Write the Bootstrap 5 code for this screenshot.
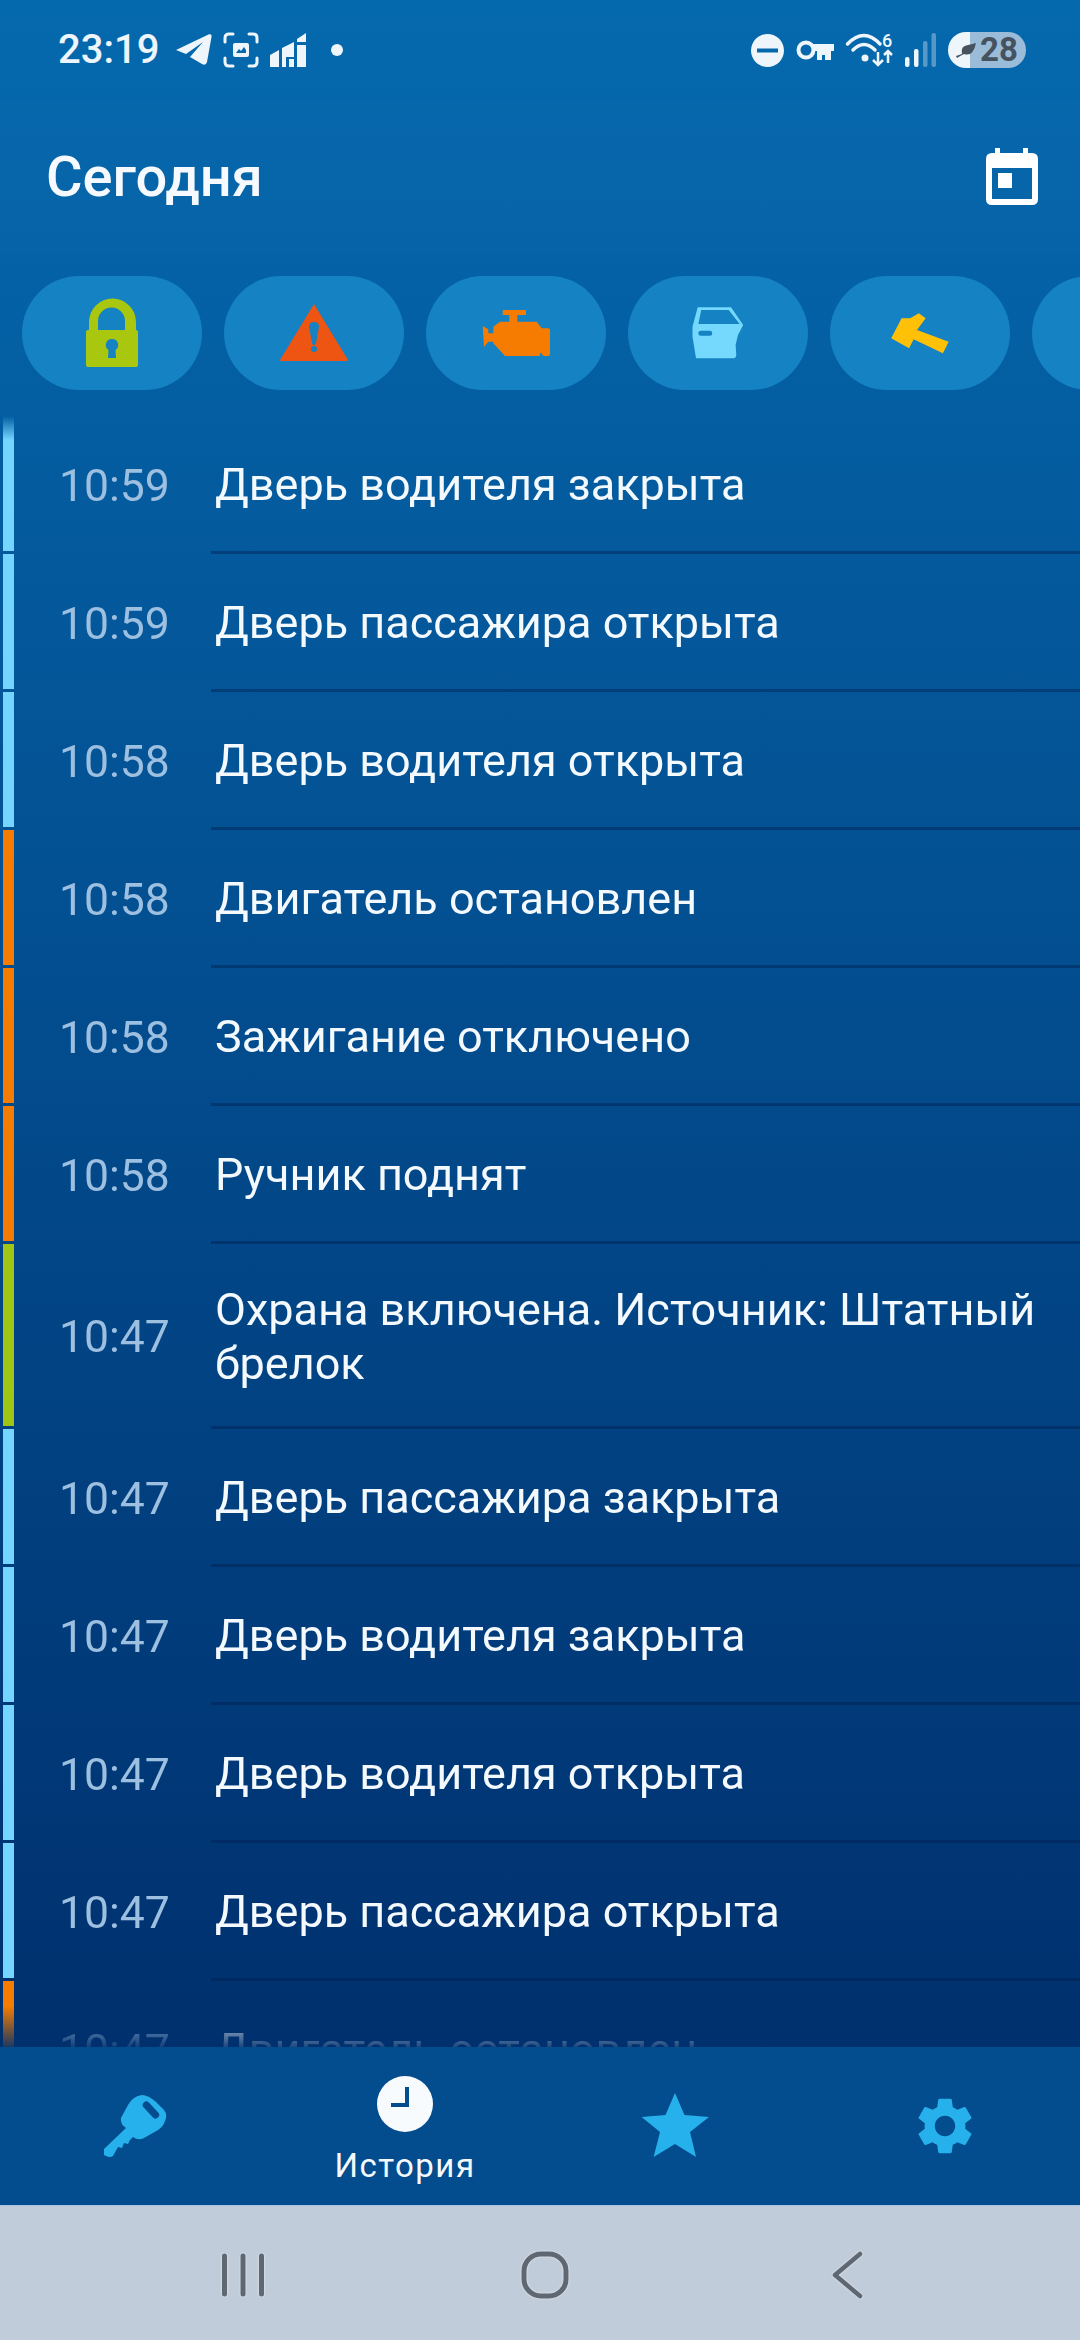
<!doctype html>
<html lang="ru">
<head>
    <meta charset="utf-8">
    <meta name="viewport" content="width=device-width, initial-scale=1">
    <title>История</title>
    <link href="https://cdn.jsdelivr.net/npm/bootstrap@5.3.5/dist/css/bootstrap.min.css" rel="stylesheet">
    <style>
        body {
            margin: 0;
            background: #00306e;
            font-family: Roboto, "Liberation Sans", sans-serif;
        }

        .screen {
            width: 1080px;
            height: 2340px;
            overflow: hidden;
            background: linear-gradient(180deg, #0569ae 0, #00306e 2047px);
            color: #f4f9fd;
        }

        .status-bar {
            height: 100px;
            padding: 0 54px 0 58px;
        }

        .status-bar svg {
            display: block;
            flex-shrink: 0;
            overflow: visible;
        }

        .status-left svg + svg {
            margin-left: 11px;
        }

        .status-left .status-dot {
            margin-left: 25px;
        }

        .status-right {
            gap: 12px;
        }

        .clock-text {
            width: 118px;
            font-size: 40px;
            font-weight: 500;
            line-height: 1;
            color: #eef5fb;
        }

        .batt {
            width: 78px;
            height: 36px;
            border-radius: 18px;
            background: linear-gradient(90deg, #eef5fb 22px, #9abcd9 22px);
            color: #47525f;
            font-size: 33px;
            font-weight: 700;
            line-height: 36px;
        }

        .top-bar {
            height: 153px;
            padding: 0 42px 0 46px;
            background: rgba(255, 255, 255, .012);
        }

        .top-title {
            font-size: 56px;
            font-weight: 500;
            color: #f6fafe;
        }

        .chip-row {
            margin-top: 23px;
            padding-left: 22px;
            gap: 22px;
            overflow: hidden;
        }

        .chip-item {
            flex: 0 0 180px;
            height: 114px;
            border-radius: 57px;
            background: #1482c3;
        }

        .event-list {
            margin-top: 26px;
            height: 1631px;
            overflow: hidden;
            -webkit-mask-image: linear-gradient(180deg, transparent 0, #000 24px, #000 1590px, rgba(0, 0, 0, .12) 1631px);
            mask-image: linear-gradient(180deg, transparent 0, #000 24px, #000 1590px, rgba(0, 0, 0, .12) 1631px);
        }

        .event-row {
            height: 138px;
        }

        .event-row.tall {
            height: 185px;
        }

        .event-bar {
            flex: 0 0 11px;
            margin: 0 0 3px 3px;
        }

        .bar-door { background: #74d6ff; }
        .bar-engine { background: #f57c00; }
        .bar-guard { background: #9fc614; }

        .event-time {
            flex: 0 0 197px;
            padding: 2px 0 0 45px;
            font-size: 44.500px;
            color: #9dbfe0;
        }

        .event-text {
            flex: 1 1 0;
            padding: 3px 30px 0 4px;
            border-bottom: 3px solid rgba(0, 28, 76, .42);
            font-size: 45px;
            line-height: 54px;
        }

        .tab-bar {
            height: 158px;
            background: #034c8d;
        }

        .tab-item {
            height: 158px;
        }

        .tab-clock {
            margin-top: 29px;
        }

        .tab-label {
            font-size: 33px;
            line-height: 36px;
            letter-spacing: 1.500px;
            margin-top: 16px;
            color: #f4f9fd;
        }

        .sys-bar {
            height: 135px;
            background: #c0ccd9;
            border-top: 1px solid #a9c6e6;
            padding: 3px 0 0 213px;
            gap: 242px;
        }

        .sys-bar svg {
            filter: drop-shadow(0 0 1px rgba(255, 255, 255, .7));
        }
    </style>
</head>

<body>
    <div class="screen d-flex flex-column">

        <div class="status-bar d-flex align-items-center justify-content-between">
            <div class="status-left d-flex align-items-center">
                <div class="clock-text">23:19</div>
                <svg width="36" height="32" viewBox="0 0 36 32" fill="#eef5fb"><path d="M0 16 33 .3Q36-.5 35.500 3L31 28Q30 32 26 30L14 23 27 8 10 20Z"/></svg>
                <svg width="36" height="36" viewBox="0 0 36 36" fill="none" stroke="#eef5fb" stroke-width="3" stroke-linecap="round"><path d="M2 10V6Q2 2 6 2H10M26 2H30Q34 2 34 6V10M34 26V30Q34 34 30 34H26M10 34H6Q2 34 2 30V26"/><path fill="#eef5fb" stroke="none" d="M10 13Q10 11 12 11H24Q26 11 26 13V23Q26 25 24 25H12Q10 25 10 23Z"/><path fill="#0569ae" stroke="none" d="M13 21 16 17 18 19 21 15 23 18V21Z"/></svg>
                <svg width="36" height="34" viewBox="0 0 36 34" fill="#eef5fb"><path d="M0 22 9 17V34H0ZM12 15 24 9V24H16V34H12ZM19 26H24V34H19ZM27 6 36 0V9H27ZM27 12H36V34H27Z"/></svg>
                <svg class="status-dot" width="12" height="12" viewBox="0 0 12 12"><circle cx="6" cy="6" r="6" fill="#eef5fb"/></svg>
            </div>
            <div class="status-right d-flex align-items-center">
                <svg width="33" height="33" viewBox="0 0 33 33"><path fill="#eef5fb" fill-rule="evenodd" d="M16.500 0a16.500 16.500 0 1 0 0 33 16.500 16.500 0 0 0 0-33ZM6 14.500H27V18.500H6Z"/></svg>
                <svg width="38" height="21" viewBox="0 0 38 21" fill="none" stroke="#eef5fb" stroke-width="4"><circle cx="10" cy="10" r="7.500"/><path fill="#eef5fb" stroke="none" d="M17 4H38V11H35V20H29V15H26V20H21V11H17Z"/></svg>
                <svg width="47" height="34" viewBox="0 0 47 34"><g fill="none" stroke="#eef5fb" stroke-width="3.500" stroke-linecap="round"><path d="M1.500 11Q18-6 34 11"/><path d="M7 17Q18 6 29 17"/></g><circle cx="19" cy="25" r="3.500" fill="#eef5fb"/><text x="36" y="14" font-family="Roboto, sans-serif" font-size="18" font-weight="500" fill="#eef5fb">6</text><g fill="none" stroke="#eef5fb" stroke-width="2.500"><path d="M32 19V32M27 27 32 32 37 27"/><path d="M42 30V18M38 22 42 18 46 22"/></g></svg>
                <svg width="31" height="34" viewBox="0 0 31 34"><rect x="0" y="24" width="4.500" height="10" rx="2" fill="#eef5fb"/><rect x="9" y="16" width="4.500" height="18" rx="2" fill="#eef5fb"/><rect x="18" y="8" width="4.500" height="26" rx="2" fill="#eef5fb" opacity=".35"/><rect x="26.500" y="0" width="4.500" height="34" rx="2" fill="#eef5fb" opacity=".35"/></svg>
                <div class="batt d-flex align-items-center">
                    <svg class="ms-2" width="20" height="16" viewBox="0 0 20 16" fill="#47525f"><path d="M0 14Q3 13 6 12 4 4 12 3 17 2 20 1 19 6 17 9 14 14 8 12 4 14 1 16Z"/></svg>
                    <span class="ms-1">28</span>
                </div>
            </div>
        </div>

        <div class="top-bar d-flex align-items-center justify-content-between">
            <div class="top-title">Сегодня</div>
            <svg width="52" height="57" viewBox="0 0 52 57"><path fill="#fff" fill-rule="evenodd" d="M9 0H14V5H37V0H42V5H46Q52 5 52 11V51Q52 57 46 57H6Q0 57 0 51V11Q0 5 6 5H9ZM6 20V51H46V20ZM12 25H26V40H12Z"/></svg>
        </div>

        <div class="chip-row d-flex">
            <div class="chip-item d-flex align-items-center justify-content-center">
                <svg width="80" height="80" viewBox="0 0 80 80"><path fill="#a8c70e" fill-rule="evenodd" d="M17 37V29A23.500 23.500 0 0 1 64 29V37H64Q66 37 66 39V72Q66 74 64 74H16Q14 74 14 72V39Q14 37 16 37ZM26 37H53V28A13.500 13.500 0 0 0 26 28ZM40 46A6 6 0 0 0 36.500 57L36 65H44L43.500 57A6 6 0 0 0 40 46Z"/></svg>
            </div>
            <div class="chip-item d-flex align-items-center justify-content-center">
                <svg width="80" height="80" viewBox="0 0 80 80"><path fill="#ee5513" fill-rule="evenodd" d="M40 11 74 67Q74 68 73 68H7Q6 68 6 67ZM40 29Q35 29 35 34L38 50Q38 52 40 52 42 52 42 50L45 34Q45 29 40 29ZM40 53A3 3 0 0 0 40 59 3 3 0 0 0 40 53Z"/></svg>
            </div>
            <div class="chip-item d-flex align-items-center justify-content-center">
                <svg width="80" height="80" viewBox="0 0 80 80"><path fill="#f57c00" d="M26.700 17H50V22H41.300V28.700H60.700L65.700 35.300H72Q74 35.300 74 37.300V61Q74 63 72 63H68Q66 63 65.700 60.300L64 60.300V63H29L17.300 50.300V48.700H12.300L8 54 6.700 33 12.300 36.300V40.300H17.300V33.700L24 28.700H33.300V22H26.700Z"/></svg>
            </div>
            <div class="chip-item d-flex align-items-center justify-content-center">
                <svg width="80" height="80" viewBox="0 0 80 80"><path fill="#74d9fd" fill-rule="evenodd" d="M19.700 14.300H53L65.200 32 60 42 57.600 52 58.300 62Q58 65.300 55.500 65.300H18L14.500 43.700V33.700ZM23.200 17 20.400 31H61.700L50.700 17ZM23 37.700Q20.400 37.700 20.400 40.200 20.400 42.700 23 42.700H31.700Q34.200 42.700 34.200 40.200 34.200 37.700 31.700 37.700Z"/></svg>
            </div>
            <div class="chip-item d-flex align-items-center justify-content-center">
                <svg width="80" height="80" viewBox="0 0 80 80"><path fill="#ffc107" d="M38.800 20.300 45.700 25.300 37 37 68.700 48.700 62.900 60.300 33.600 46.300 29.100 55.300 11.200 45.300 21.600 25.300H30.200Z"/></svg>
            </div>
            <div class="chip-item"></div>
        </div>

        <div class="event-list">
            <div class="event-row d-flex"><div class="event-bar bar-door"></div><div class="event-time d-flex align-items-center">10:59</div><div class="event-text d-flex align-items-center">Дверь водителя закрыта</div></div>
            <div class="event-row d-flex"><div class="event-bar bar-door"></div><div class="event-time d-flex align-items-center">10:59</div><div class="event-text d-flex align-items-center">Дверь пассажира открыта</div></div>
            <div class="event-row d-flex"><div class="event-bar bar-door"></div><div class="event-time d-flex align-items-center">10:58</div><div class="event-text d-flex align-items-center">Дверь водителя открыта</div></div>
            <div class="event-row d-flex"><div class="event-bar bar-engine"></div><div class="event-time d-flex align-items-center">10:58</div><div class="event-text d-flex align-items-center">Двигатель остановлен</div></div>
            <div class="event-row d-flex"><div class="event-bar bar-engine"></div><div class="event-time d-flex align-items-center">10:58</div><div class="event-text d-flex align-items-center">Зажигание отключено</div></div>
            <div class="event-row d-flex"><div class="event-bar bar-engine"></div><div class="event-time d-flex align-items-center">10:58</div><div class="event-text d-flex align-items-center">Ручник поднят</div></div>
            <div class="event-row tall d-flex"><div class="event-bar bar-guard"></div><div class="event-time d-flex align-items-center">10:47</div><div class="event-text d-flex align-items-center">Охрана включена. Источник: Штатный брелок</div></div>
            <div class="event-row d-flex"><div class="event-bar bar-door"></div><div class="event-time d-flex align-items-center">10:47</div><div class="event-text d-flex align-items-center">Дверь пассажира закрыта</div></div>
            <div class="event-row d-flex"><div class="event-bar bar-door"></div><div class="event-time d-flex align-items-center">10:47</div><div class="event-text d-flex align-items-center">Дверь водителя закрыта</div></div>
            <div class="event-row d-flex"><div class="event-bar bar-door"></div><div class="event-time d-flex align-items-center">10:47</div><div class="event-text d-flex align-items-center">Дверь водителя открыта</div></div>
            <div class="event-row d-flex"><div class="event-bar bar-door"></div><div class="event-time d-flex align-items-center">10:47</div><div class="event-text d-flex align-items-center">Дверь пассажира открыта</div></div>
            <div class="event-row d-flex"><div class="event-bar bar-engine"></div><div class="event-time d-flex align-items-center">10:47</div><div class="event-text d-flex align-items-center">Двигатель остановлен</div></div>
        </div>

        <div class="tab-bar row g-0">
            <div class="col-3 tab-item d-flex align-items-center justify-content-center">
                <svg width="70" height="70" viewBox="0 0 70 70"><path fill="#27b1ec" fill-rule="evenodd" d="M42 4Q48 4 56 11L64 19Q68 24 65 30 63 36 58 39L44 47Q38 50 33 46L30 49 28 53 24 52 22 57 18 56 13 65Q10 67 6 65L4 64V58L26 37Q20 33 21 27L28 14Q33 5 42 4ZM48.900 11.600A3.500 3.500 0 0 0 43.700 16.400L53 26.400A3.500 3.500 0 0 0 58.200 21.600Z"/></svg>
            </div>
            <div class="col-3 tab-item d-flex flex-column align-items-center">
                <svg class="tab-clock" width="56" height="56" viewBox="0 0 56 56"><path fill="#f8fbfe" fill-rule="evenodd" d="M28 0a28 28 0 1 0 0 56 28 28 0 0 0 0-56ZM28 11H32V31H14V27H28Z"/></svg>
                <div class="tab-label">История</div>
            </div>
            <div class="col-3 tab-item d-flex align-items-center justify-content-center">
                <svg width="70" height="70" viewBox="0 0 70 70"><path fill="#27b1ec" d="M35 2 44.500 24 69 26 50 41 56 66 35 53 13.600 66 20 41 1.600 26 25.500 24Z"/></svg>
            </div>
            <div class="col-3 tab-item d-flex align-items-center justify-content-center">
                <svg width="68" height="68" viewBox="0 0 24 24"><path fill="#27b1ec" d="M19.140 12.940c.04-.3.06-.61.06-.94 0-.32-.02-.64-.07-.94l2.030-1.580c.18-.14.23-.41.12-.61l-1.920-3.320c-.12-.22-.37-.29-.59-.22l-2.390.96c-.5-.38-1.030-.7-1.620-.94l-.36-2.540c-.04-.24-.24-.41-.48-.41h-3.840c-.24 0-.43.17-.47.41l-.36 2.540c-.59.24-1.130.57-1.620.94l-2.390-.96c-.22-.08-.47 0-.59.22L2.740 8.870c-.12.21-.08.47.12.61l2.030 1.580c-.05.3-.09.63-.09.94s.02.64.07.94l-2.030 1.580c-.18.14-.23.41-.12.61l1.920 3.320c.12.22.37.29.59.22l2.390-.96c.5.38 1.030.7 1.620.94l.36 2.540c.05.24.24.41.48.41h3.840c.24 0 .44-.17.47-.41l.36-2.540c.59-.24 1.130-.56 1.620-.94l2.390.96c.22.08.47 0 .59-.22l1.920-3.320c.12-.22.07-.47-.12-.61l-2.010-1.580zM12 15.600c-1.980 0-3.600-1.620-3.600-3.600s1.620-3.600 3.600-3.600 3.600 1.620 3.600 3.600-1.620 3.600-3.600 3.600z"/></svg>
            </div>
        </div>

        <div class="sys-bar d-flex align-items-center">
            <svg width="60" height="60" viewBox="0 0 60 60" fill="none" stroke="#5f6772" stroke-width="5" stroke-linecap="round"><path d="M11.500 11V49M30 11V49M48.500 11V49"/></svg>
            <svg width="60" height="60" viewBox="0 0 60 60" fill="none" stroke="#5f6772" stroke-width="5"><rect x="9" y="9" width="42" height="42" rx="17"/></svg>
            <svg width="60" height="60" viewBox="0 0 60 60" fill="none" stroke="#5f6772" stroke-width="4.500" stroke-linecap="round" stroke-linejoin="round"><path d="M43 9 18 30 43 51"/></svg>
        </div>
    </div>

    <script src="https://cdn.jsdelivr.net/npm/bootstrap@5.3.5/dist/js/bootstrap.bundle.min.js"></script>
</body>
</html>
